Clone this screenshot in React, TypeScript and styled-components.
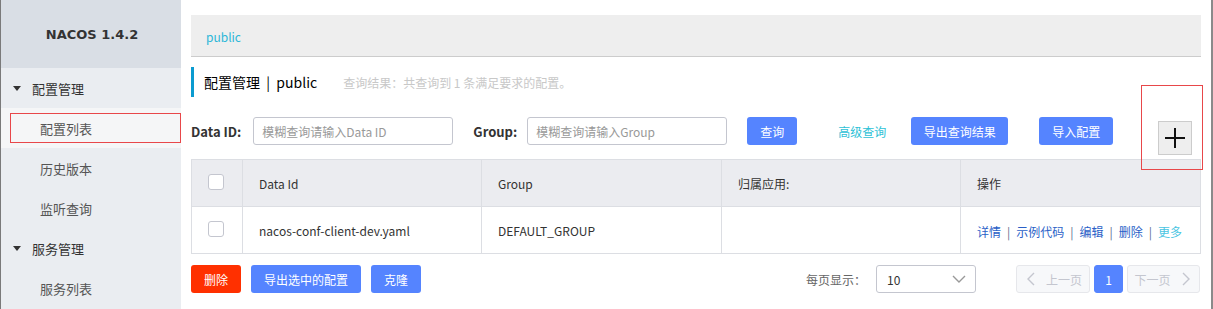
import React from 'react';
import styled, { createGlobalStyle } from 'styled-components';

const GlobalStyle = createGlobalStyle`
  html, body {
    margin: 0;
    padding: 0;
    background: #fff;
    font-family: "Noto Sans CJK SC", "Noto Sans", sans-serif;
    font-size: 12px;
    color: #333;
  }
  * { box-sizing: border-box; }
`;

interface IBtnProps {
  w: number;
  danger?: boolean;
}

interface ICellProps {
  w: number;
}

interface IMenuProps {
  active?: boolean;
}

interface ILinkProps {
  more?: boolean;
}

const Page = styled.div`
  display: flex;
  width: 1213px;
  height: 309px;
  border-left: 1px solid #7a7a7a;
  border-right: 2px solid #8a8a8a;
  overflow: hidden;
`;

const Sidebar = styled.div`
  width: 180px;
  flex-shrink: 0;
  background: #eaedf1;
  display: flex;
  flex-direction: column;
`;

const Logo = styled.div`
  height: 68px;
  background: #d9dee5;
  display: flex;
  align-items: center;
  justify-content: center;
  font-family: "DejaVu Sans", sans-serif;
  font-weight: bold;
  font-size: 13px;
  color: #333;
  padding-left: 2px;
`;

const MenuGroup = styled.div`
  height: 40px;
  display: flex;
  align-items: center;
  padding-left: 12px;
  gap: 11px;
  font-size: 13px;
  color: #333;
`;

const Caret = styled.span`
  width: 0;
  height: 0;
  border-left: 4px solid transparent;
  border-right: 4px solid transparent;
  border-top: 5px solid #333;
`;

const MenuItem = styled.div<IMenuProps>`
  height: 40px;
  display: flex;
  align-items: center;
  background: ${({ active }) => (active ? '#f5f6f7' : 'transparent')};
  font-size: 13px;
  color: #555;
`;

const ItemLabel = styled.div<IMenuProps>`
  flex: 1;
  height: 30px;
  display: flex;
  align-items: center;
  margin-left: 9px;
  padding-left: 29px;
  border: 1px solid ${({ active }) => (active ? '#e8474a' : 'transparent')};
`;

const Main = styled.div`
  flex: 1;
  padding: 15px 10px 0 10px;
  display: flex;
  flex-direction: column;
`;

const Breadcrumb = styled.div`
  height: 42px;
  background: #eeeeee;
  border-bottom: 1px solid #cccccc;
  display: flex;
  align-items: center;
  padding-left: 15px;
  padding-top: 1px;
  color: #2cb7d8;
  font-size: 12px;
`;

const TitleRow = styled.div`
  margin-top: 10px;
  height: 30px;
  border-left: 3px solid #0b9bd0;
  display: flex;
  align-items: center;
  padding-left: 10px;
`;

const Title = styled.span`
  font-size: 14px;
  color: #000;
`;

const Hint = styled.span`
  margin-left: 26px;
  font-size: 12px;
  color: #c8c8c8;
`;

const SearchRow = styled.div`
  margin-top: 20px;
  display: flex;
  align-items: flex-start;
  height: 38px;
`;

const Field = styled.div<{ gap: number }>`
  display: flex;
  align-items: center;
  height: 28px;
  gap: ${({ gap }) => gap}px;
  margin-right: 20px;
`;

const Label = styled.span`
  font-weight: bold;
  font-size: 13px;
  color: #333;
`;

const Input = styled.div`
  width: 200px;
  height: 28px;
  border: 1px solid #c4c6cf;
  border-radius: 3px;
  padding-left: 8px;
  display: flex;
  align-items: center;
  color: #999;
  font-size: 12px;
`;

const Button = styled.button<IBtnProps>`
  width: ${({ w }) => w}px;
  height: 28px;
  flex-shrink: 0;
  border: none;
  border-radius: 3px;
  background: ${({ danger }) => (danger ? '#ff3000' : '#5584ff')};
  color: #fff;
  font-family: inherit;
  font-size: 12px;
  padding: 0;
  cursor: pointer;
`;

const ImportButton = styled(Button)`
  margin-left: 31px;
`;

const TextButton = styled.span`
  height: 28px;
  display: flex;
  align-items: center;
  margin: 0 25px 0 41px;
  color: #2dc1d6;
  font-size: 12px;
`;

const PlusWrap = styled.div`
  position: relative;
  margin: 4px 9px 0 auto;
`;

const PlusButton = styled.div`
  width: 34px;
  height: 34px;
  background: #eeeeee;
  border: 1px solid #cccccc;
  display: flex;
  align-items: center;
  justify-content: center;
`;

const Highlight = styled.div`
  position: absolute;
  left: -17px;
  top: -36px;
  width: 62px;
  height: 85px;
  border: 1px solid #e8474a;
  pointer-events: none;
`;

const Table = styled.div`
  margin-top: 4px;
  width: 1010px;
  border: 1px solid #dcdee3;
`;

const Row = styled.div<{ head?: boolean }>`
  display: flex;
  height: ${({ head }) => (head ? 47 : 46)}px;
  background: ${({ head }) => (head ? '#ebecf0' : '#fff')};
  border-bottom: ${({ head }) => (head ? '1px solid #dcdee3' : 'none')};
  color: #333;
`;

const Cell = styled.div<ICellProps>`
  width: ${({ w }) => w}px;
  flex-shrink: 0;
  display: flex;
  align-items: center;
  padding-left: 16px;
  border-right: 1px solid #dcdee3;
  font-size: 12px;
  &:last-child {
    border-right: none;
    flex: 1;
  }
`;

const CheckCell = styled(Cell)`
  padding-bottom: 2px;
`;

const Checkbox = styled.span`
  width: 16px;
  height: 16px;
  border: 1px solid #c4c6cf;
  border-radius: 3px;
  background: #fff;
`;

const Actions = styled.div`
  display: flex;
  align-items: center;
  gap: 6px;
  font-size: 12px;
  padding-top: 2px;
`;

const Link = styled.span<ILinkProps>`
  color: ${({ more }) => (more ? '#4ac5e2' : '#2a5fc7')};
`;

const Sep = styled.span`
  color: #5d6f8f;
`;

const Footer = styled.div`
  margin-top: 11px;
  display: flex;
  align-items: center;
  height: 28px;
`;

const FooterLeft = styled.div`
  display: flex;
  gap: 10px;
`;

const FooterRight = styled.div`
  margin-left: auto;
  margin-right: 1px;
  display: flex;
  align-items: center;
`;

const PageSizeLabel = styled.span`
  color: #666;
  font-size: 12px;
  margin-right: 10px;
`;

const Select = styled.div`
  width: 100px;
  height: 28px;
  border: 1px solid #c4c6cf;
  border-radius: 3px;
  display: flex;
  align-items: center;
  justify-content: space-between;
  padding: 0 8px 0 10px;
  color: #333;
  font-size: 12px;
  margin-right: 40px;
`;

const Pager = styled.div`
  display: flex;
  gap: 4px;
`;

const PageBtn = styled.div<{ w: number; current?: boolean }>`
  width: ${({ w }) => w}px;
  height: 28px;
  border-radius: 3px;
  border: 1px solid ${({ current }) => (current ? '#5584ff' : '#e6e7eb')};
  background: ${({ current }) => (current ? '#5584ff' : '#f7f8fa')};
  color: ${({ current }) => (current ? '#fff' : '#c4c6cf')};
  display: flex;
  align-items: center;
  justify-content: center;
  gap: 6px;
  font-size: 12px;
`;

const Chevron = ({ dir }: { dir: 'down' | 'left' | 'right' }) => {
  const d =
    dir === 'down' ? 'M2 5 L8 11 L14 5' : dir === 'left' ? 'M10 2 L4 8 L10 14' : 'M6 2 L12 8 L6 14';
  return (
    <svg width="16" height="16" viewBox="0 0 16 16">
      <path d={d} fill="none" stroke={dir === 'down' ? '#999' : '#c4c6cf'} strokeWidth="1.4" />
    </svg>
  );
};

const PlusIcon = () => (
  <svg width="22" height="22" viewBox="0 0 22 22">
    <path d="M11 1 V21 M1 11 H21" stroke="#111" strokeWidth="2" />
  </svg>
);

const cols = [51, 239, 240, 239, 240];

const App = () => {
  return (
    <>
      <GlobalStyle />
      <Page>
        <Sidebar>
          <Logo>NACOS 1.4.2</Logo>
          <MenuGroup>
            <Caret />
            配置管理
          </MenuGroup>
          <MenuItem active>
            <ItemLabel active>配置列表</ItemLabel>
          </MenuItem>
          <MenuItem>
            <ItemLabel>历史版本</ItemLabel>
          </MenuItem>
          <MenuItem>
            <ItemLabel>监听查询</ItemLabel>
          </MenuItem>
          <MenuGroup>
            <Caret />
            服务管理
          </MenuGroup>
          <MenuItem>
            <ItemLabel>服务列表</ItemLabel>
          </MenuItem>
        </Sidebar>
        <Main>
          <Breadcrumb>public</Breadcrumb>
          <TitleRow>
            <Title>配置管理&nbsp;&nbsp;|&nbsp;&nbsp;public</Title>
            <Hint>查询结果：共查询到 1 条满足要求的配置。</Hint>
          </TitleRow>
          <SearchRow>
            <Field gap={12}>
              <Label>Data ID:</Label>
              <Input>模糊查询请输入Data ID</Input>
            </Field>
            <Field gap={10}>
              <Label>Group:</Label>
              <Input>模糊查询请输入Group</Input>
            </Field>
            <Button w={50}>查询</Button>
            <TextButton>高级查询</TextButton>
            <Button w={97}>导出查询结果</Button>
            <ImportButton w={74}>导入配置</ImportButton>
            <PlusWrap>
              <PlusButton>
                <PlusIcon />
              </PlusButton>
              <Highlight />
            </PlusWrap>
          </SearchRow>
          <Table>
            <Row head>
              <CheckCell w={cols[0]}>
                <Checkbox />
              </CheckCell>
              <Cell w={cols[1]}>Data Id</Cell>
              <Cell w={cols[2]}>Group</Cell>
              <Cell w={cols[3]}>归属应用:</Cell>
              <Cell w={cols[4]}>操作</Cell>
            </Row>
            <Row>
              <CheckCell w={cols[0]}>
                <Checkbox />
              </CheckCell>
              <Cell w={cols[1]}>nacos-conf-client-dev.yaml</Cell>
              <Cell w={cols[2]}>DEFAULT_GROUP</Cell>
              <Cell w={cols[3]} />
              <Cell w={cols[4]}>
                <Actions>
                  <Link>详情</Link>
                  <Sep>|</Sep>
                  <Link>示例代码</Link>
                  <Sep>|</Sep>
                  <Link>编辑</Link>
                  <Sep>|</Sep>
                  <Link>删除</Link>
                  <Sep>|</Sep>
                  <Link more>更多</Link>
                </Actions>
              </Cell>
            </Row>
          </Table>
          <Footer>
            <FooterLeft>
              <Button w={50} danger>
                删除
              </Button>
              <Button w={110}>导出选中的配置</Button>
              <Button w={50}>克隆</Button>
            </FooterLeft>
            <FooterRight>
              <PageSizeLabel>每页显示：</PageSizeLabel>
              <Select>
                10
                <Chevron dir="down" />
              </Select>
              <Pager>
                <PageBtn w={74}>
                  <Chevron dir="left" />
                  上一页
                </PageBtn>
                <PageBtn w={29} current>
                  1
                </PageBtn>
                <PageBtn w={73}>
                  下一页
                  <Chevron dir="right" />
                </PageBtn>
              </Pager>
            </FooterRight>
          </Footer>
        </Main>
      </Page>
    </>
  );
};

export default App;
